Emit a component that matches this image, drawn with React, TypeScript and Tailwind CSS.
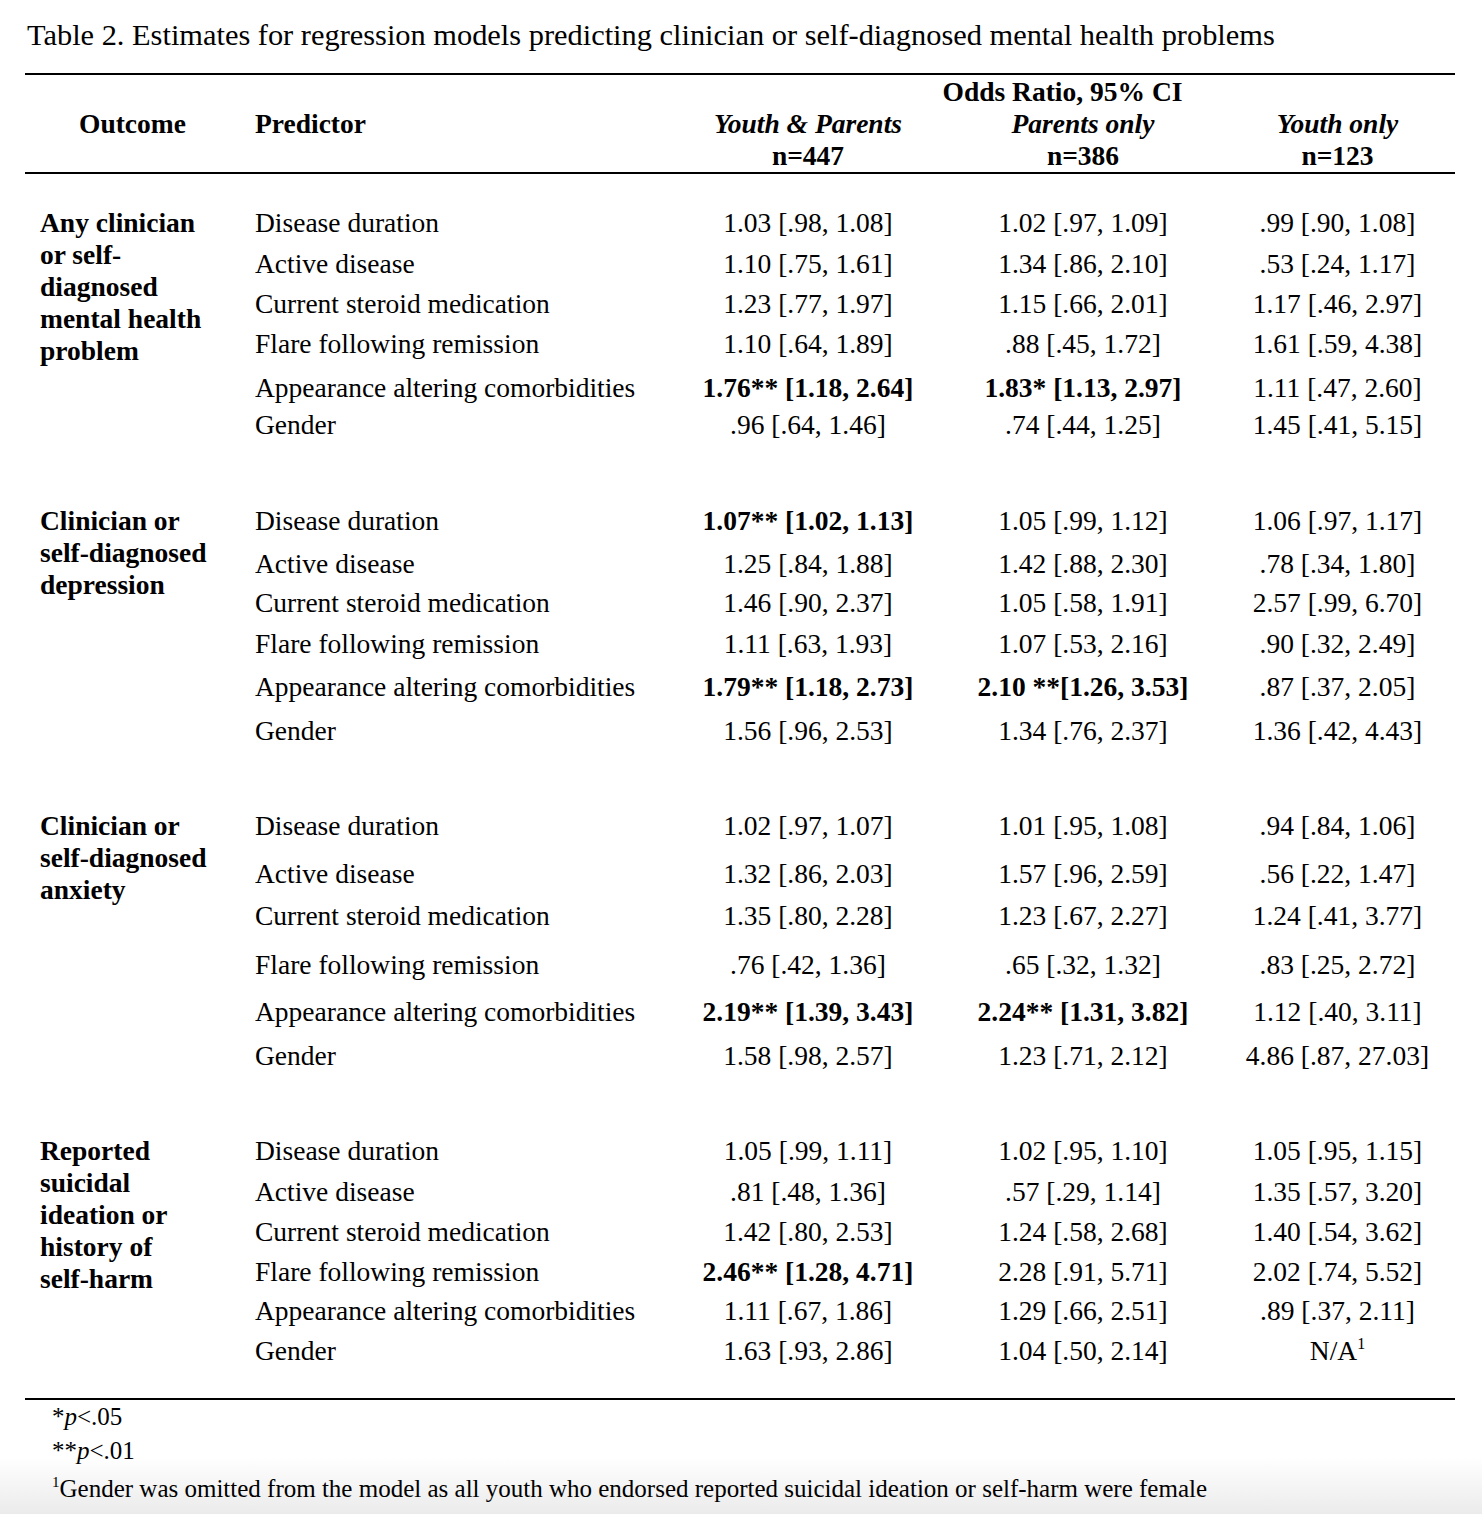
import React from "react"

type Cell = { text: string; bold?: boolean }
type Row = { predictor: string; gap: string; cells: Cell[] }
type Group = { outcome: string[]; gap: string; rows: Row[] }

const c = (text: string, bold = false): Cell => ({ text, bold })

const groups: Group[] = [
  {
    outcome: ["Any clinician", "or self-", "diagnosed", "mental health", "problem"],
    gap: "pt-[34px]",
    rows: [
      { predictor: "Disease duration", gap: "", cells: [c("1.03 [.98, 1.08]"), c("1.02 [.97, 1.09]"), c(".99 [.90, 1.08]")] },
      { predictor: "Active disease", gap: "mt-[11px]", cells: [c("1.10 [.75, 1.61]"), c("1.34 [.86, 2.10]"), c(".53 [.24, 1.17]")] },
      { predictor: "Current steroid medication", gap: "mt-[10px]", cells: [c("1.23 [.77, 1.97]"), c("1.15 [.66, 2.01]"), c("1.17 [.46, 2.97]")] },
      { predictor: "Flare following remission", gap: "mt-[10px]", cells: [c("1.10 [.64, 1.89]"), c(".88 [.45, 1.72]"), c("1.61 [.59, 4.38]")] },
      { predictor: "Appearance altering comorbidities", gap: "mt-[14px]", cells: [c("1.76** [1.18, 2.64]", true), c("1.83* [1.13, 2.97]", true), c("1.11 [.47, 2.60]")] },
      { predictor: "Gender", gap: "mt-[7px]", cells: [c(".96 [.64, 1.46]"), c(".74 [.44, 1.25]"), c("1.45 [.41, 5.15]")] },
    ],
  },
  {
    outcome: ["Clinician or", "self-diagnosed", "depression"],
    gap: "pt-[66px]",
    rows: [
      { predictor: "Disease duration", gap: "", cells: [c("1.07** [1.02, 1.13]", true), c("1.05 [.99, 1.12]"), c("1.06 [.97, 1.17]")] },
      { predictor: "Active disease", gap: "mt-[13px]", cells: [c("1.25 [.84, 1.88]"), c("1.42 [.88, 2.30]"), c(".78 [.34, 1.80]")] },
      { predictor: "Current steroid medication", gap: "mt-[9px]", cells: [c("1.46 [.90, 2.37]"), c("1.05 [.58, 1.91]"), c("2.57 [.99, 6.70]")] },
      { predictor: "Flare following remission", gap: "mt-[11px]", cells: [c("1.11 [.63, 1.93]"), c("1.07 [.53, 2.16]"), c(".90 [.32, 2.49]")] },
      { predictor: "Appearance altering comorbidities", gap: "mt-[13px]", cells: [c("1.79** [1.18, 2.73]", true), c("2.10 **[1.26, 3.53]", true), c(".87 [.37, 2.05]")] },
      { predictor: "Gender", gap: "mt-[14px]", cells: [c("1.56 [.96, 2.53]"), c("1.34 [.76, 2.37]"), c("1.36 [.42, 4.43]")] },
    ],
  },
  {
    outcome: ["Clinician or", "self-diagnosed", "anxiety"],
    gap: "pt-[65px]",
    rows: [
      { predictor: "Disease duration", gap: "", cells: [c("1.02 [.97, 1.07]"), c("1.01 [.95, 1.08]"), c(".94 [.84, 1.06]")] },
      { predictor: "Active disease", gap: "mt-[18px]", cells: [c("1.32 [.86, 2.03]"), c("1.57 [.96, 2.59]"), c(".56 [.22, 1.47]")] },
      { predictor: "Current steroid medication", gap: "mt-[12px]", cells: [c("1.35 [.80, 2.28]"), c("1.23 [.67, 2.27]"), c("1.24 [.41, 3.77]")] },
      { predictor: "Flare following remission", gap: "mt-[19px]", cells: [c(".76 [.42, 1.36]"), c(".65 [.32, 1.32]"), c(".83 [.25, 2.72]")] },
      { predictor: "Appearance altering comorbidities", gap: "mt-[17px]", cells: [c("2.19** [1.39, 3.43]", true), c("2.24** [1.31, 3.82]", true), c("1.12 [.40, 3.11]")] },
      { predictor: "Gender", gap: "mt-[14px]", cells: [c("1.58 [.98, 2.57]"), c("1.23 [.71, 2.12]"), c("4.86 [.87, 27.03]")] },
    ],
  },
  {
    outcome: ["Reported", "suicidal", "ideation or", "history of", "self-harm"],
    gap: "pt-[65px]",
    rows: [
      { predictor: "Disease duration", gap: "", cells: [c("1.05 [.99, 1.11]"), c("1.02 [.95, 1.10]"), c("1.05 [.95, 1.15]")] },
      { predictor: "Active disease", gap: "mt-[11px]", cells: [c(".81 [.48, 1.36]"), c(".57 [.29, 1.14]"), c("1.35 [.57, 3.20]")] },
      { predictor: "Current steroid medication", gap: "mt-[10px]", cells: [c("1.42 [.80, 2.53]"), c("1.24 [.58, 2.68]"), c("1.40 [.54, 3.62]")] },
      { predictor: "Flare following remission", gap: "mt-[10px]", cells: [c("2.46** [1.28, 4.71]", true), c("2.28 [.91, 5.71]"), c("2.02 [.74, 5.52]")] },
      { predictor: "Appearance altering comorbidities", gap: "mt-[9px]", cells: [c("1.11 [.67, 1.86]"), c("1.29 [.66, 2.51]"), c(".89 [.37, 2.11]")] },
      { predictor: "Gender", gap: "mt-[10px]", cells: [c("1.63 [.93, 2.86]"), c("1.04 [.50, 2.14]"), c("N/A")] },
    ],
  },
]

const colWidths = ["w-[276px]", "w-[274px]", "w-[235px]"]

function ValueCell({ cell, width }: { cell: Cell; width: string }) {
  return (
    <div className={`${width} text-center ${cell.bold ? "font-bold" : ""}`}>
      {cell.text}
      {cell.text === "N/A" && <sup className="text-[16px] relative -top-[11px]">1</sup>}
    </div>
  )
}

export default function App() {
  return (
    <div className="w-[1482px] min-h-[1514px] bg-white text-black font-['Liberation_Serif',serif] flex flex-col">
      {/* Caption */}
      <div className="pl-[27px] pt-[17px] text-[30.4px] leading-[36px]">
        Table 2. Estimates for regression models predicting clinician or self-diagnosed mental health problems
      </div>

      <div className="mx-[25px] mt-[20px] w-[1430px] text-[27.5px]">
        {/* Header */}
        <div className="border-t-2 border-b-2 border-black pt-px">
          <div className="flex leading-[32px]">
            <div className="w-[645px]" />
            <div className="w-[785px] text-center font-bold">Odds Ratio, 95% CI</div>
          </div>
          <div className="flex leading-[32px] font-bold">
            <div className="w-[215px] text-center">Outcome</div>
            <div className="w-[430px] pl-[15px]">Predictor</div>
            <div className="w-[276px] text-center italic">Youth &amp; Parents</div>
            <div className="w-[274px] text-center italic">Parents only</div>
            <div className="w-[235px] text-center italic">Youth only</div>
          </div>
          <div className="flex leading-[32px] font-bold">
            <div className="w-[645px]" />
            <div className="w-[276px] text-center">n=447</div>
            <div className="w-[274px] text-center">n=386</div>
            <div className="w-[235px] text-center">n=123</div>
          </div>
        </div>

        {/* Body */}
        <div className="border-b-2 border-black pb-[32px]">
          {groups.map((g, gi) => (
            <div key={gi} className={`flex ${g.gap}`}>
              <div className="w-[215px] pl-[15px] font-bold leading-[32px] -mt-px">
                {g.outcome.map((line, li) => (
                  <div key={li}>{line}</div>
                ))}
              </div>
              <div className="flex-1">
                {g.rows.map((r, ri) => (
                  <div key={ri} className={`flex leading-[30px] ${r.gap}`}>
                    <div className="w-[430px] pl-[15px]">{r.predictor}</div>
                    {r.cells.map((cell, ci) => (
                      <ValueCell key={ci} cell={cell} width={colWidths[ci]} />
                    ))}
                  </div>
                ))}
              </div>
            </div>
          ))}
        </div>
      </div>

      {/* Notes */}
      <div className="flex-1 bg-gradient-to-b from-white via-white to-[#ebebeb] pl-[52px] text-[25px]">
        <div className="leading-[34px]">
          *<span className="italic">p</span>&lt;.05
        </div>
        <div className="leading-[34px]">
          **<span className="italic">p</span>&lt;.01
        </div>
        <div className="leading-[34px] mt-[4px]">
          <sup className="text-[15px] relative -top-[10px]">1</sup>Gender was omitted from the model as all youth who endorsed reported suicidal ideation or self-harm were female
        </div>
      </div>
    </div>
  )
}
